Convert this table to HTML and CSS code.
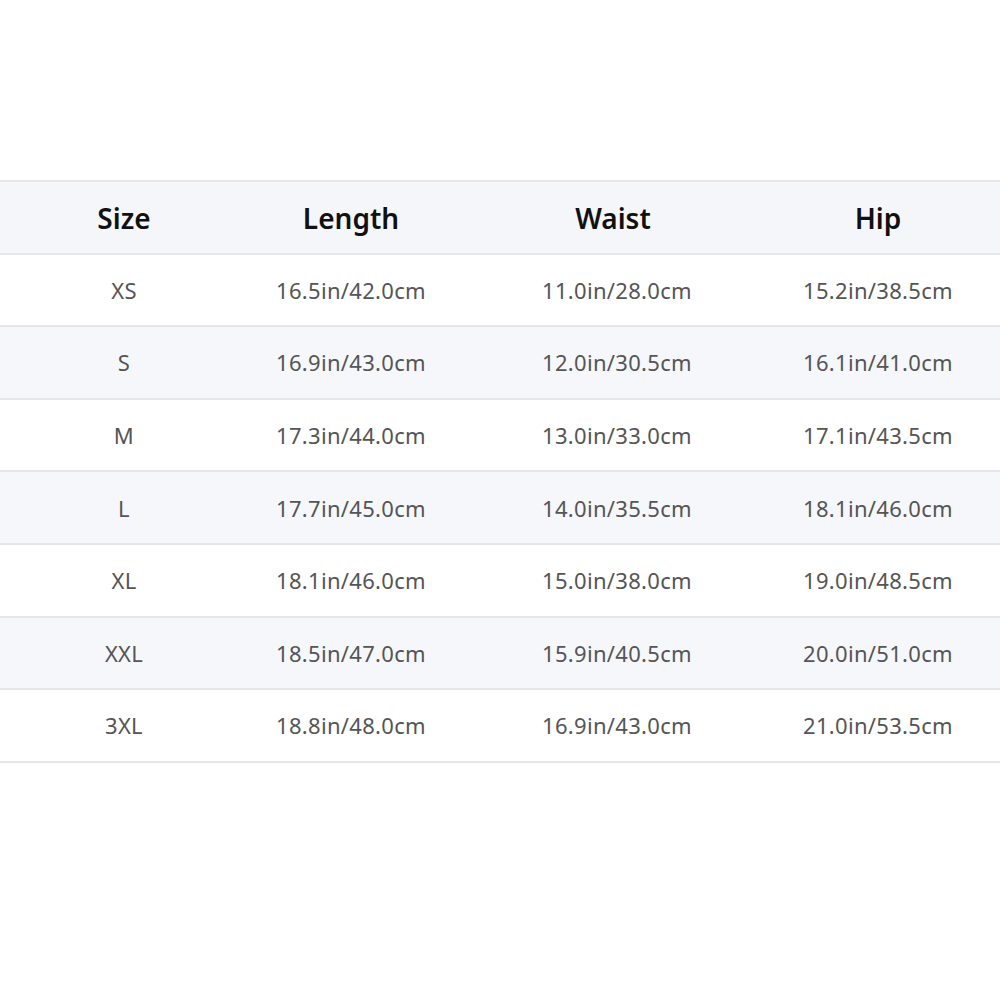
FILE: index.html
```html
<!DOCTYPE html>
<html>
<head>
<meta charset="utf-8">
<link rel="stylesheet" href="styles.css">
</head>
<body>
<div class="table">
  <div class="row head">
    <div class="c c1">Size</div><div class="c c2">Length</div><div class="c c3">Waist</div><div class="c c4">Hip</div>
  </div>
  <div class="row">
    <div class="c c1">XS</div><div class="c c2">16.5in/42.0cm</div><div class="c c3">11.0in/28.0cm</div><div class="c c4">15.2in/38.5cm</div>
  </div>
  <div class="row alt">
    <div class="c c1">S</div><div class="c c2">16.9in/43.0cm</div><div class="c c3">12.0in/30.5cm</div><div class="c c4">16.1in/41.0cm</div>
  </div>
  <div class="row">
    <div class="c c1">M</div><div class="c c2">17.3in/44.0cm</div><div class="c c3">13.0in/33.0cm</div><div class="c c4">17.1in/43.5cm</div>
  </div>
  <div class="row alt">
    <div class="c c1">L</div><div class="c c2">17.7in/45.0cm</div><div class="c c3">14.0in/35.5cm</div><div class="c c4">18.1in/46.0cm</div>
  </div>
  <div class="row">
    <div class="c c1">XL</div><div class="c c2">18.1in/46.0cm</div><div class="c c3">15.0in/38.0cm</div><div class="c c4">19.0in/48.5cm</div>
  </div>
  <div class="row alt">
    <div class="c c1">XXL</div><div class="c c2">18.5in/47.0cm</div><div class="c c3">15.9in/40.5cm</div><div class="c c4">20.0in/51.0cm</div>
  </div>
  <div class="row">
    <div class="c c1">3XL</div><div class="c c2">18.8in/48.0cm</div><div class="c c3">16.9in/43.0cm</div><div class="c c4">21.0in/53.5cm</div>
  </div>
</div>
</body>
</html>
```
FILE: styles.css
```css
html, body {
  margin: 0;
  padding: 0;
  background: #ffffff;
}
body {
  font-family: "Noto Sans", "Open Sans", sans-serif;
  padding-top: 180px;
}
.table {
  border-top: 2px solid #e6e6e8;
}
.row {
  display: grid;
  grid-template-columns: 248px 206px 326px 196px;
  height: 70.6px;
  border-bottom: 2px solid #e6e6e8;
  align-items: center;
  color: #555555;
  font-size: 22px;
  letter-spacing: 0.3px;
  background: #ffffff;
}
.row.alt {
  background: #f6f7fb;
}
.row.head {
  background: #f5f6fa;
  color: #111111;
  font-size: 28px;
  font-weight: 600;
  letter-spacing: 0;
  padding-top: 2px;
  height: 68.6px;
}
.head .c3 {
  padding-right: 8px;
}
.c {
  text-align: center;
  white-space: nowrap;
}
```
